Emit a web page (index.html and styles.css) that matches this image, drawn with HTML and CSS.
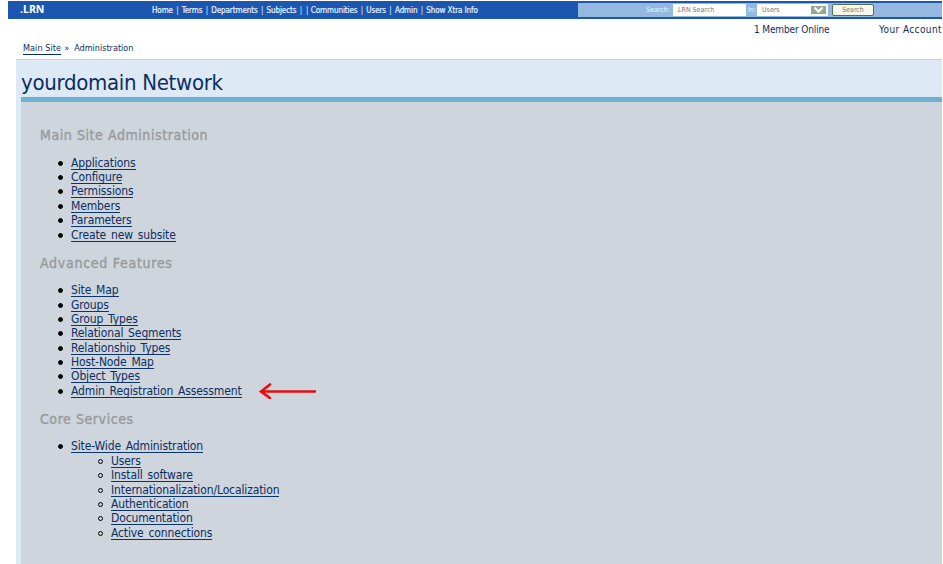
FILE: index.html
```html
<!DOCTYPE html>
<html lang="en">
<head>
<meta charset="utf-8">
<title>yourdomain Network</title>
<link rel="stylesheet" href="styles.css">
</head>
<body>
<div class="page">
  <header class="topbar">
    <span class="logo">.LRN</span>
    <nav class="nav"><a>Home</a><i>|</i><a>Terms</a><i>|</i><a>Departments</a><i>|</i><a>Subjects</a><i>|</i><i class="second">|</i><a>Communities</a><i>|</i><a>Users</a><i>|</i><a>Admin</a><i>|</i><a>Show Xtra Info</a></nav>
    <form class="search">
      <span class="label">Search:</span>
      <span class="field">.LRN Search</span>
      <span class="label in">In:</span>
      <span class="select">Users
        <svg width="15" height="8" viewBox="0 0 15 8"><rect width="15" height="8" fill="#93aa8c"/><path d="M3.500 1.500L7.500 5.500L11.500 1.500" fill="none" stroke="#fff" stroke-width="2"/></svg>
      </span>
      <span class="button">Search</span>
    </form>
  </header>
  <div class="account"><span class="online">1 Member Online</span><span class="your">Your Account</span></div>
  <div class="crumbs"><a>Main Site</a><span class="sep">»</span><span>Administration</span></div>
  <main class="portal">
    <h1>yourdomain Network</h1>
    <div class="content">
      <h2>Main Site Administration</h2>
      <ul>
        <li><a>Applications</a></li>
        <li><a>Configure</a></li>
        <li><a>Permissions</a></li>
        <li><a>Members</a></li>
        <li><a>Parameters</a></li>
        <li><a>Create new subsite</a></li>
      </ul>
      <h2 class="wide">Advanced Features</h2>
      <ul>
        <li><a>Site Map</a></li>
        <li><a>Groups</a></li>
        <li><a>Group Types</a></li>
        <li><a>Relational Segments</a></li>
        <li><a>Relationship Types</a></li>
        <li><a>Host-Node Map</a></li>
        <li><a>Object Types</a></li>
        <li><a>Admin Registration Assessment</a><svg class="arrow" width="58" height="16" viewBox="0 0 58 16"><path d="M2 8.500H56M11 1.500L2 8.500L11 15" fill="none" stroke="#e80c10" stroke-width="2.600" stroke-linecap="round"/></svg></li>
      </ul>
      <h2>Core Services</h2>
      <ul>
        <li><a>Site-Wide Administration</a>
          <ul class="sub">
            <li><a>Users</a></li>
            <li><a>Install software</a></li>
            <li><a>Internationalization/Localization</a></li>
            <li><a>Authentication</a></li>
            <li><a>Documentation</a></li>
            <li><a>Active connections</a></li>
          </ul>
        </li>
      </ul>
    </div>
  </main>
</div>
</body>
</html>
```
FILE: styles.css
```css
*, *::before { box-sizing: border-box; }
body {
  margin: 0;
  background: #fff;
  color: #0c2e62;
  font-family: "DejaVu Sans Condensed", "DejaVu Sans", sans-serif;
  font-stretch: condensed;
  overflow: hidden;
}
.page {
  width: 942px;
  height: 564px;
  padding-top: 1px;
  display: flex;
  flex-direction: column;
  overflow: hidden;
}
.topbar {
  flex: none;
  display: flex;
  height: 18px;
  margin-left: 8px;
  background: #1b57b0;
  color: #fff;
}
.logo {
  width: 144px;
  padding-left: 12px;
  font: bold 10.500px/17px "Open Sans", sans-serif;
}
.nav {
  width: 426px;
  font-size: 8px;
  letter-spacing: -0.090px;
  line-height: 19px;
  white-space: nowrap;
  display: flex;
  color: #e6f2ff;
}
.nav a { -webkit-text-stroke: 0.200px #e6f2ff; }
.nav i { font-style: normal; width: 8.900px; text-align: center; }
.nav .second { width: 5.500px; margin-left: -1px; margin-right: 1px; }
.search {
  width: 364px;
  height: 14px;
  margin: 2px 0 0;
  padding-left: 68px;
  display: flex;
  background: #94b8e0;
  font-size: 7px;
  line-height: 14px;
  color: #777;
}
.label { width: 27px; color: #eef6ff; white-space: nowrap; }
.field { width: 73px; height: 12px; margin-top: 1px; padding-left: 3px; background: #fff; line-height: 12px; }
.label.in { width: 11px; padding-left: 2px; }
.select {
  width: 71px;
  height: 12px;
  margin-top: 1px;
  padding: 0 2px 0 5px;
  display: flex;
  align-items: center;
  justify-content: space-between;
  background: #fff;
  line-height: 12px;
}
.button {
  width: 42px;
  height: 12px;
  margin: 1px 0 0 4px;
  border: 1px solid #55704a;
  border-radius: 2px;
  background: #f7f8ec;
  line-height: 11px;
  text-align: center;
}
.account {
  flex: none;
  display: flex;
  height: 22px;
  padding-left: 754px;
  font-size: 10px;
  line-height: 22px;
  white-space: nowrap;
}
.online { letter-spacing: -0.130px; }
.your { margin-left: auto; letter-spacing: 0.400px; }
.crumbs {
  flex: none;
  height: 18px;
  padding: 1px 0 0 23px;
  font-size: 9px;
  line-height: 12px;
  display: flex;
}
.crumbs a { height: 13px; border-bottom: 1px solid #0c2e62; letter-spacing: 0.080px; }
.sep { width: 13px; padding-left: 3px; }
.portal {
  flex: 1;
  display: flex;
  flex-direction: column;
  margin-left: 16px;
  padding-left: 5px;
  border-top: 1px solid #c5d3df;
  background: #dde9f4;
}
h1 {
  margin: 0;
  height: 42px;
  border-bottom: 5px solid #6eb1cd;
  font-size: 22px;
  font-weight: 400;
  letter-spacing: -0.300px;
  line-height: 45px;
}
.content { flex: 1; padding: 23px 0 0 19px; background: #ced5dc; }
h2 {
  margin: 0 0 10.600px;
  font-size: 14px;
  font-weight: 400;
  letter-spacing: 0.570px;
  line-height: 20px;
  color: #999b9f;
  -webkit-text-stroke: 0.400px #999b9f;
}
h2.wide { letter-spacing: 0.730px; }
ul {
  margin: 0 0 10.600px;
  padding-left: 31px;
  list-style: none;
  font-size: 12px;
  letter-spacing: -0.120px;
  word-spacing: 1.500px;
  line-height: 14.400px;
}
ul.sub { margin: 0; padding-left: 40px; }
li { position: relative; height: 14.400px; white-space: nowrap; }
li::before {
  content: "";
  position: absolute;
  left: -13px;
  top: 5px;
  width: 5px;
  height: 5px;
  border: 1px solid #000;
  border-radius: 50%;
  background: #000;
}
.sub li::before { background: none; }
li a { display: inline-block; height: 14px; line-height: 14px; border-bottom: 1px solid #0c3468; vertical-align: top; }
.arrow { position: absolute; left: 188px; top: -1px; }
```
